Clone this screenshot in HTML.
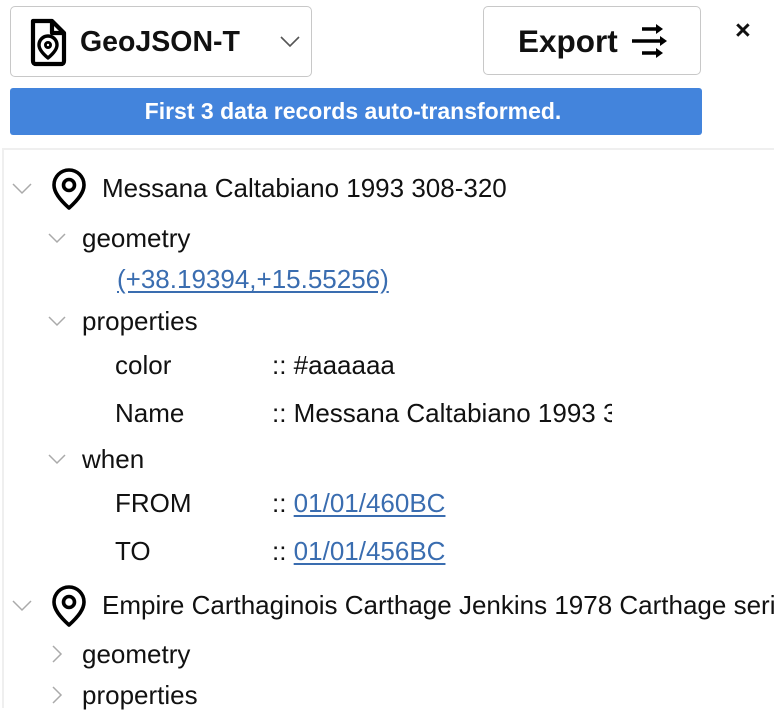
<!DOCTYPE html>
<html><head><meta charset="utf-8"><style>
*{margin:0;padding:0;box-sizing:border-box}
body{width:774px;height:696px;overflow:hidden;background:#fff;font-family:"Liberation Sans",Arial,sans-serif;color:#111;position:relative}
.abs{position:absolute}
.sel{left:10px;top:6px;width:302px;height:71px;border:1.5px solid #c8c8c8;border-radius:5px}
.btn{left:483px;top:6px;width:218px;height:69px;border:1.5px solid #c8c8c8;border-radius:5px}
.bar{left:10px;top:88px;width:692px;height:47px;background:#4384dc;border-radius:3px;color:#fff;font-weight:bold;font-size:23px;text-align:center;line-height:47px;padding-right:6px}
.tree{left:2px;top:148px;width:780px;height:560px;border-top:2px solid #efefef;border-left:2px solid #efefef}
.t{position:absolute;font-size:26px;line-height:30px;white-space:nowrap}
.lk{color:#3a6db0;text-decoration:underline;text-underline-offset:3px}
.chev{position:absolute}
</style></head><body>
<div class="abs sel"></div>
<svg class="abs" style="left:28px;top:17px" width="40" height="50" viewBox="0 0 40 50" fill="none" stroke="#000" stroke-width="4.2" stroke-linejoin="round">
<path d="M5 4 H24 L36 16 V44 Q36 47 33 47 H8 Q5 47 5 44 Z"/><path d="M24 4 V16 H36"/>
<path d="M20 41 C14 36 11 32 11 28 A9 9 0 0 1 29 28 C29 32 26 36 20 41 Z" stroke-width="3.4"/><circle cx="20" cy="28" r="2.6" stroke-width="2.8"/>
</svg>
<div class="abs" style="left:80px;top:24px;font-size:28.5px;font-weight:bold;line-height:36px">GeoJSON-T</div>
<svg class="abs" style="left:280px;top:36px" width="20" height="12" viewBox="0 0 20 12"><path d="M1 1 L10 10 L19 1" fill="none" stroke="#555" stroke-width="1.6"/></svg>
<div class="abs btn"></div>
<div class="abs" style="left:518px;top:22px;font-size:31.5px;font-weight:bold;line-height:38px">Export</div>
<svg class="abs" style="left:630px;top:22px" width="40" height="38" viewBox="0 0 40 38" fill="#000" stroke="#000">
<path d="M12 7 H28" stroke-width="3.5"/><path d="M26 2 L33 7 L26 12 Z" stroke="none"/>
<path d="M2 19 H32" stroke-width="3.5"/><path d="M30 14 L37 19 L30 24 Z" stroke="none"/>
<path d="M12 31 H28" stroke-width="3.5"/><path d="M26 26 L33 31 L26 36 Z" stroke="none"/>
</svg>
<div class="abs" style="left:735px;top:15px;font-size:27px;font-weight:bold;line-height:30px">×</div>
<div class="abs bar">First 3 data records auto-transformed.</div>
<div class="abs tree"></div>

<svg class="chev" style="left:12px;top:183px" width="20" height="12" viewBox="0 0 20 12"><path d="M1 1 L10 10 L19 1" fill="none" stroke="#aaa" stroke-width="1.5"/></svg>
<svg class="abs" style="left:51px;top:168px" width="36" height="42" viewBox="0 0 36 42" fill="none" stroke="#000" stroke-width="3.6"><path d="M18 40 C8 31 3 24 3 17 A15 15 0 0 1 33 17 C33 24 28 31 18 40 Z" stroke-linejoin="round"/><circle cx="18" cy="17" r="5.5"/></svg>
<div class="t" style="left:102px;top:173px">Messana Caltabiano 1993 308-320</div>

<svg class="chev" style="left:48px;top:233px" width="18" height="11" viewBox="0 0 18 11"><path d="M1 1 L9 9 L17 1" fill="none" stroke="#aaa" stroke-width="1.5"/></svg>
<div class="t" style="left:82px;top:223px">geometry</div>
<div class="t lk" style="left:117px;top:264px">(+38.19394,+15.55256)</div>
<svg class="chev" style="left:48px;top:316px" width="18" height="11" viewBox="0 0 18 11"><path d="M1 1 L9 9 L17 1" fill="none" stroke="#aaa" stroke-width="1.5"/></svg>
<div class="t" style="left:82px;top:306px">properties</div>
<div class="t" style="left:115px;top:350px">color</div>
<div class="t" style="left:272px;top:350px">:: #aaaaaa</div>
<div class="t" style="left:115px;top:398px">Name</div>
<div class="t" style="left:272px;top:398px;width:340px;overflow:hidden">:: Messana Caltabiano 1993 308-320</div>
<svg class="chev" style="left:48px;top:454px" width="18" height="11" viewBox="0 0 18 11"><path d="M1 1 L9 9 L17 1" fill="none" stroke="#aaa" stroke-width="1.5"/></svg>
<div class="t" style="left:82px;top:444px">when</div>
<div class="t" style="left:115px;top:488px">FROM</div>
<div class="t" style="left:272px;top:488px">:: <span class="lk">01/01/460BC</span></div>
<div class="t" style="left:115px;top:536px">TO</div>
<div class="t" style="left:272px;top:536px">:: <span class="lk">01/01/456BC</span></div>

<svg class="chev" style="left:12px;top:600px" width="20" height="12" viewBox="0 0 20 12"><path d="M1 1 L10 10 L19 1" fill="none" stroke="#aaa" stroke-width="1.5"/></svg>
<svg class="abs" style="left:51px;top:585px" width="36" height="42" viewBox="0 0 36 42" fill="none" stroke="#000" stroke-width="3.6"><path d="M18 40 C8 31 3 24 3 17 A15 15 0 0 1 33 17 C33 24 28 31 18 40 Z" stroke-linejoin="round"/><circle cx="18" cy="17" r="5.5"/></svg>
<div class="t" style="left:102px;top:590px">Empire Carthaginois Carthage Jenkins 1978 Carthage series</div>
<svg class="chev" style="left:52px;top:645px" width="11" height="18" viewBox="0 0 11 18"><path d="M1 1 L9 9 L1 17" fill="none" stroke="#aaa" stroke-width="1.5"/></svg>
<div class="t" style="left:82px;top:639px">geometry</div>
<svg class="chev" style="left:52px;top:686px" width="11" height="18" viewBox="0 0 11 18"><path d="M1 1 L9 9 L1 17" fill="none" stroke="#aaa" stroke-width="1.5"/></svg>
<div class="t" style="left:82px;top:680px">properties</div>
</body></html>
